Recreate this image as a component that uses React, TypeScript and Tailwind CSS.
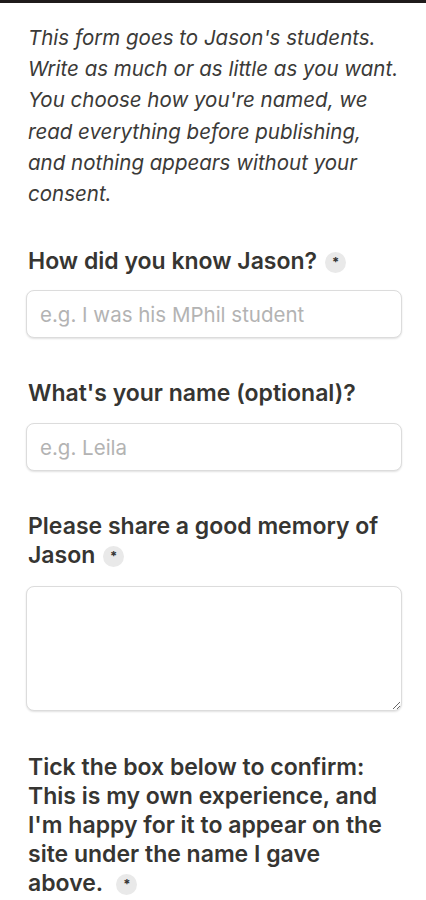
import React from "react";

function Req() {
  return (
    <span className="ml-2 inline-flex h-[21px] w-[21px] items-center justify-center rounded-full bg-[#e9e9e9] align-[2px] text-[13px] font-bold leading-none text-[#333]">
      *
    </span>
  );
}

function Label({ children, req }: { children: React.ReactNode; req?: boolean }) {
  return (
    <div className="text-[23px] font-semibold leading-[29px] text-[#363532]">
      {children}
      {req && <Req />}
    </div>
  );
}

const field =
  "block w-[376px] -ml-[2px] rounded-[8px] border border-[#dcdcdc] bg-white px-[13px] text-[20.5px] text-[#333] shadow-[0_1px_2px_rgba(0,0,0,0.12)] outline-none placeholder:text-[#b3b3b3]";

export default function App() {
  return (
    <div
      className="min-h-[900px] bg-white"
      style={{ fontFamily: "Inter, 'Noto Sans', sans-serif" }}
    >
      <div className="h-[3px] bg-[#1f1b1b]" />
      <div className="px-[28px] pt-[19px]">
        <p className="w-[373px] text-[20.5px] italic leading-[31.2px] text-[#3b3a38]">
          This form goes to Jason's students. Write as much or as little as you want. You choose how you're named, we read everything before publishing, and nothing appears without your consent.
        </p>

        <div className="mt-[38px]">
          <Label req>How did you know Jason?</Label>
          <input placeholder="e.g. I was his MPhil student" className={"mt-[14px] h-[48px] " + field} />
        </div>

        <div className="mt-[41px]">
          <Label>What's your name (optional)?</Label>
          <input placeholder="e.g. Leila" className={"mt-[15px] h-[48px] " + field} />
        </div>

        <div className="mt-[41px]">
          <Label req>Please share a good memory of Jason</Label>
          <textarea className={"mt-[16px] h-[125px] resize-y py-[10px] " + field} />
        </div>

        <div className="mt-[42px]">
          <Label req>
            Tick the box below to confirm: This is my own experience, and I'm happy for it to appear on the site under the name I gave above.{" "}
          </Label>
        </div>
      </div>
    </div>
  );
}
